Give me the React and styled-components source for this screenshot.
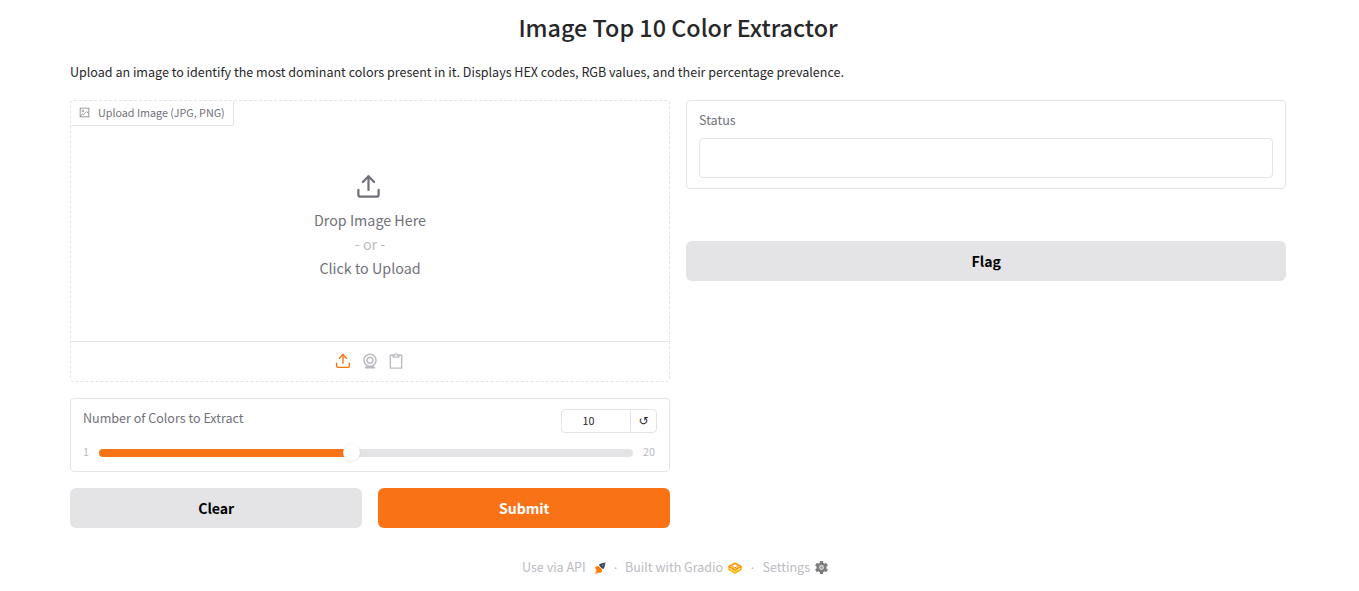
import React from "react";
import styled, { createGlobalStyle } from "styled-components";

const GlobalStyle = createGlobalStyle`
  * { box-sizing: border-box; }
  body {
    margin: 0;
    background: #fff;
    color: #27272a;
    font-family: "Noto Sans CJK SC", "Noto Sans", sans-serif;
  }
  button, input { font: inherit; color: inherit; }
`;

const Page = styled.main`
  width: 1216px;
  margin-left: 70px;
  height: 591px;
  padding-top: 10px;
  overflow: hidden;
`;

const Title = styled.h1`
  margin: 0;
  height: 34px;
  line-height: 34px;
  text-align: center;
  font-size: 23.35px;
  font-weight: 500;
  color: #27272a;
`;

const Description = styled.p`
  margin: 17px 0 0;
  height: 21px;
  line-height: 21px;
  font-size: 12.54px;
  white-space: nowrap;
`;

const Columns = styled.div`
  display: grid;
  grid-template-columns: 1fr 1fr;
  gap: 16px;
  margin-top: 18px;
`;

const Column = styled.div`
  display: flex;
  flex-direction: column;
  gap: ${(p) => p.$gap}px;
`;

const Panel = styled.section`
  border: 1px ${(p) => (p.$dashed ? "dashed" : "solid")} #e4e4e7;
  border-radius: 4px;
  height: ${(p) => p.$height}px;
  padding: ${(p) => p.$padding || "0"};
`;

const UploadPanel = styled(Panel)`
  display: flex;
  flex-direction: column;
`;

const UploadLabel = styled.div`
  align-self: flex-start;
  display: flex;
  align-items: center;
  gap: 8px;
  width: 163px;
  height: 25px;
  padding-left: 8px;
  border: solid #e4e4e7;
  border-width: 0 1px 1px 0;
  border-radius: 3px 0 3px 0;
  font-size: 10.75px;
  line-height: 24px;
  color: #71717a;
  white-space: nowrap;

  svg { margin-bottom: 1px; }
`;

const DropZone = styled.div`
  flex: 1;
  display: flex;
  flex-direction: column;
  align-items: center;
  padding-top: 47px;
  font-size: 14.3px;
  line-height: 24px;
  color: #71717a;

  svg { margin: 0 3px 8px 0; }
`;

const Or = styled.span`
  color: #bbbbc2;
`;

const Sources = styled.div`
  height: 40px;
  padding: 0 1px 1px 0;
  border-top: 1px solid #e4e4e7;
  display: flex;
  justify-content: center;
  align-items: center;
  gap: 8px;
  color: #bbbbc2;

  svg:first-child { margin-right: 1px; }
`;

const SliderHead = styled.div`
  display: flex;
  justify-content: space-between;
`;

const FieldLabel = styled.span`
  display: block;
  font-size: 12.55px;
  line-height: 18px;
  color: #71717a;
`;

const NumberBox = styled.div`
  display: flex;
  width: 96px;
  height: 24px;
  border: 1px solid #e4e4e7;
  border-radius: 4px;
  font-size: 10.75px;
  line-height: 22px;
  text-align: center;
`;

const NumberValue = styled.span`
  flex: 1;
  padding-right: 15px;
`;

const Reset = styled.button`
  width: 26px;
  padding: 0;
  border: 0;
  border-left: 1px solid #e4e4e7;
  background: none;
  font-family: "DejaVu Sans", sans-serif;
  font-size: 12px;
  line-height: 19px;
`;

const SliderRow = styled.div`
  display: flex;
  align-items: center;
  gap: 10px;
  margin-top: 9px;
  height: 20px;
  font-size: 10.75px;
  line-height: 20px;
  color: #bbbbc2;
`;

const Bound = styled.span`
  width: ${(p) => p.$width}px;
`;

const Track = styled.div`
  flex: 1;
  display: flex;
  align-items: center;
  height: 8px;
  margin-top: 2px;
  border-radius: 4px;
  background: #e4e4e7;
`;

const Fill = styled.div`
  height: 8px;
  border-radius: 4px 0 0 4px;
  background: #f97316;
`;

const Thumb = styled.div`
  flex: none;
  width: 17px;
  height: 17px;
  margin: -2px 0 0 -9px;
  border-radius: 50%;
  background: #fff;
  box-shadow: 0 0 1px rgba(0, 0, 0, 0.08), 0 1px 3px rgba(0, 0, 0, 0.08);
`;

const Buttons = styled.div`
  display: grid;
  grid-template-columns: 1fr 1fr;
  gap: 16px;
`;

const Button = styled.button`
  height: 40px;
  padding: 0;
  border: 0;
  border-radius: 6px;
  font-size: 14.1px;
  font-weight: 700;
  line-height: 40px;
  letter-spacing: -0.03px;
  text-indent: 0.5px;
  background: ${(p) => (p.$primary ? "#f97316" : "#e4e4e7")};
  color: ${(p) => (p.$primary ? "#fff" : "#000")};
`;

const StatusInput = styled.input`
  display: block;
  width: 100%;
  height: 40px;
  margin-top: 9px;
  border: 1px solid #e4e4e7;
  border-radius: 4px;
  background: #fff;
`;

const Footer = styled.footer`
  display: flex;
  align-items: center;
  margin: 29px 0 0 452px;
  height: 20px;
  font-size: 12.55px;
  line-height: 20px;
  color: #bbbbc2;
  white-space: nowrap;
`;

const FooterLink = styled.span`
  display: flex;
  align-items: center;
  width: ${(p) => p.$width}px;
  justify-content: space-between;

  svg { margin-top: 1px; }
`;

const Dot = styled.span`
  width: ${(p) => p.$width}px;
  font-family: "Liberation Sans", sans-serif;
  font-size: 14px;
  text-align: center;
`;

const Stroke = ({ size, box = "0 0 24 24", color = "currentColor", children }) => (
  <svg width={size} height={size} viewBox={box} fill="none" stroke={color}
    strokeWidth="2" strokeLinecap="round" strokeLinejoin="round">{children}</svg>
);

const UploadIcon = (props) => (
  <Stroke {...props}>
    <path d="M21 15v4a2 2 0 0 1-2 2H5a2 2 0 0 1-2-2v-4" />
    <polyline points="17 8 12 3 7 8" />
    <line x1="12" y1="3" x2="12" y2="15" />
  </Stroke>
);

const ImageIcon = () => (
  <svg width="11" height="11" viewBox="0 0 24 24" fill="none" stroke="#85858d" strokeWidth="1.8">
    <rect x="2.5" y="2.5" width="19" height="19" />
    <circle cx="8.5" cy="8.5" r="1.8" />
    <path d="M21 14l-5-4-6 6-2-1-5 5" />
  </svg>
);

const WebcamIcon = () => (
  <svg width="18" height="18" viewBox="0 0 24 24" fill="currentColor">
    <path d="M12 2c-4.963 0-9 4.038-9 9c0 3.328 1.82 6.232 4.513 7.79l-2.067 1.378A1 1 0 0 0 6 22h12a1 1 0 0 0 .555-1.832l-2.067-1.378C19.18 17.232 21 14.328 21 11c0-4.962-4.037-9-9-9zm0 16c-3.859 0-7-3.141-7-7c0-3.86 3.141-7 7-7s7 3.14 7 7c0 3.859-3.141 7-7 7z" />
    <path d="M12 6c-2.757 0-5 2.243-5 5s2.243 5 5 5s5-2.243 5-5s-2.243-5-5-5zm0 8c-1.654 0-3-1.346-3-3s1.346-3 3-3s3 1.346 3 3s-1.346 3-3 3z" />
  </svg>
);

const ClipboardIcon = () => (
  <Stroke size={18} box="-0.7 -0.7 25.4 25.4">
    <path d="M16 4h4v18H4V4h4" />
    <path d="M8 6.5V4h2a2 2 0 0 1 4 0h2v2.5z" />
  </Stroke>
);

const RocketIcon = () => (
  <svg width="12" height="12" viewBox="0 0 24 24">
    <path d="M10 5l4-2 4-1 5-1-1 5-1 4-2 4-3-1-5-5z" fill="#3b4658" />
    <circle cx="17.5" cy="6.5" r="1.5" fill="#8d96a4" />
    <path d="M2 11l4-3 4 1 6 6 0 4-4 3-2-1-7 3 2-7z" fill="#ff7c00" />
    <path d="M3 18l3 2-5 4z" fill="#ffc17d" />
  </svg>
);

const GradioIcon = () => (
  <svg width="14" height="12" viewBox="0 0 28 24" fill="none" strokeLinejoin="round">
    <path d="M2 9v6l12 7 12-7V9" stroke="#ffb800" strokeWidth="3" />
    <path d="M14 2.5l12 6.5-12 6.5L2 9z" stroke="#ff9300" strokeWidth="3" />
    <path d="M8 8.5l6 3 6-3" stroke="#ff9c10" strokeWidth="2" />
    <path d="M8 15l6 3 6-3" stroke="#ffb000" strokeWidth="2" />
  </svg>
);

const GearIcon = () => (
  <svg width="13" height="13" viewBox="0 0 24 24">
    <g fill="#7d7d7d">
      <circle cx="12" cy="12" r="9" />
      {[0, 60, 120].map((a) => (
        <rect key={a} x="9" y="0" width="6" height="24" rx="1" transform={`rotate(${a} 12 12)`} />
      ))}
    </g>
    <circle cx="12" cy="12" r="4.4" fill="#dcdcdc" />
    <circle cx="12" cy="12" r="2.2" fill="#999" />
  </svg>
);

export default function App() {
  const percent = ((10 - 1) / (20 - 1)) * 100;
  return (
    <Page>
      <GlobalStyle />
      <Title>Image Top 10 Color Extractor</Title>
      <Description>
        Upload an image to identify the most dominant colors present in it. Displays HEX codes, RGB values, and their percentage prevalence.
      </Description>
      <Columns>
        <Column $gap={16}>
          <UploadPanel $dashed $height={282}>
            <UploadLabel><ImageIcon />Upload Image (JPG, PNG)</UploadLabel>
            <DropZone>
              <UploadIcon size={27} />
              <span>Drop Image Here</span>
              <Or>- or -</Or>
              <span>Click to Upload</span>
            </DropZone>
            <Sources>
              <UploadIcon size={18} box="-0.7 -0.7 25.4 25.4" color="#f97316" />
              <WebcamIcon />
              <ClipboardIcon />
            </Sources>
          </UploadPanel>
          <Panel $height={74} $padding="10px 12px">
            <SliderHead>
              <FieldLabel>Number of Colors to Extract</FieldLabel>
              <NumberBox>
                <NumberValue>10</NumberValue>
                <Reset>↺</Reset>
              </NumberBox>
            </SliderHead>
            <SliderRow>
              <Bound $width={6}>1</Bound>
              <Track>
                <Fill style={{ width: `${percent}%` }} />
                <Thumb />
              </Track>
              <Bound $width={14}>20</Bound>
            </SliderRow>
          </Panel>
          <Buttons>
            <Button>Clear</Button>
            <Button $primary>Submit</Button>
          </Buttons>
        </Column>
        <Column $gap={52}>
          <Panel $height={89} $padding="10px 12px">
            <FieldLabel>Status</FieldLabel>
            <StatusInput readOnly />
          </Panel>
          <Button>Flag</Button>
        </Column>
      </Columns>
      <Footer>
        <FooterLink $width={84}>Use via API <RocketIcon /></FooterLink>
        <Dot $width={19}>·</Dot>
        <FooterLink $width={117}>Built with Gradio <GradioIcon /></FooterLink>
        <Dot $width={20.5}>·</Dot>
        <FooterLink $width={65.5}>Settings <GearIcon /></FooterLink>
      </Footer>
    </Page>
  );
}
